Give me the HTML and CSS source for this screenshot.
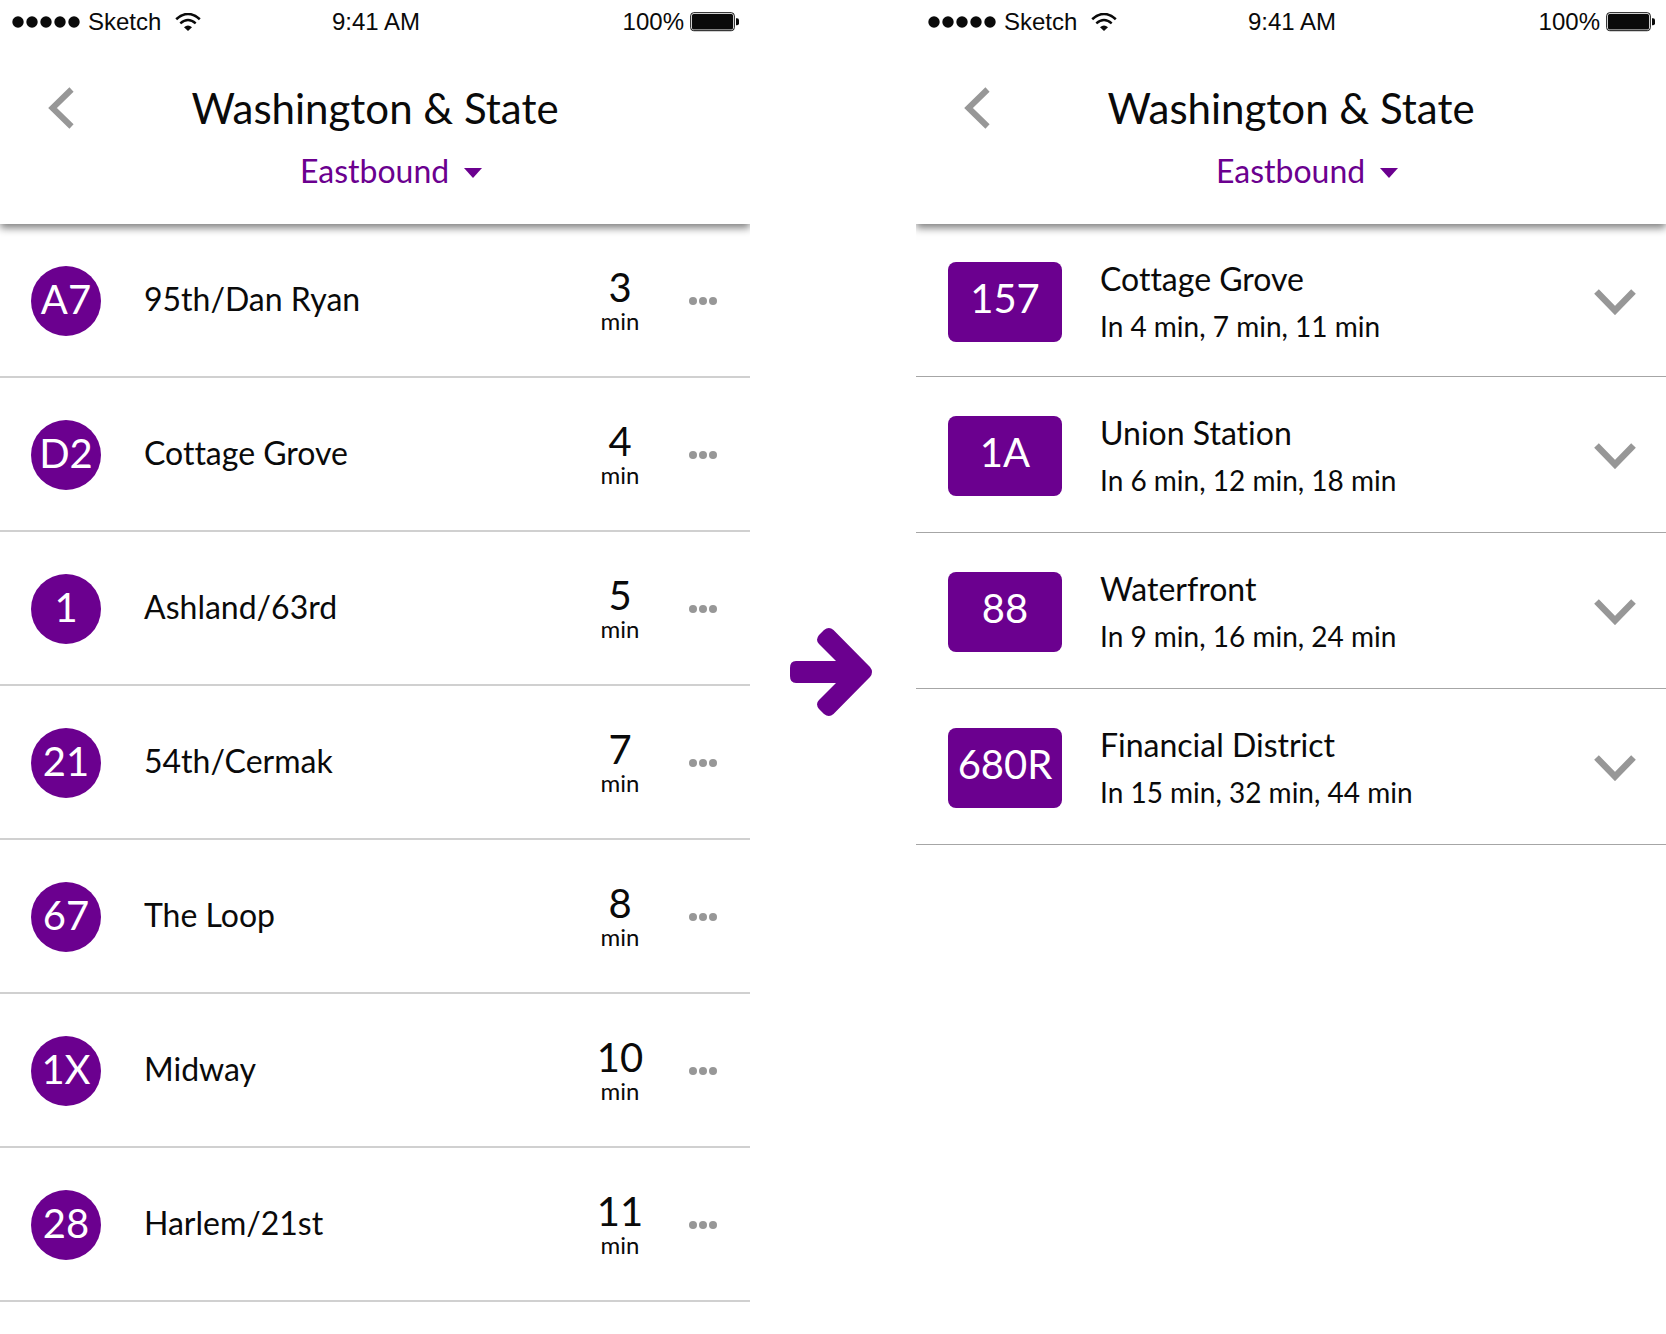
FILE: index.html
```html
<!DOCTYPE html>
<html lang="en">
<head>
<meta charset="utf-8">
<meta name="viewport" content="width=device-width, initial-scale=1">
<title>Washington &amp; State departures</title>
<link rel="stylesheet" href="styles.css">
</head>
<body>
<svg width="0" height="0" class="sprite" aria-hidden="true">
  <symbol id="signal" viewBox="0 0 68 12">
    <circle cx="6" cy="6" r="5.700"/><circle cx="20" cy="6" r="5.700"/><circle cx="34" cy="6" r="5.700"/><circle cx="48" cy="6" r="5.700"/><circle cx="62" cy="6" r="5.700"/>
  </symbol>
  <symbol id="wifi" viewBox="0 0 26 18">
    <path d="M1.2 6.2Q13-4.2 24.800 6.200" fill="none" stroke="currentColor" stroke-width="2.600"/>
    <path d="M5.300 10.300Q13 3.500 20.700 10.300" fill="none" stroke="currentColor" stroke-width="2.400"/>
    <path d="M9 14.200Q13 10.600 17 14.200L13 18Z"/>
  </symbol>
  <symbol id="battery" viewBox="0 0 50 20">
    <rect x=".7" y=".7" width="43.600" height="18" rx="3" fill="none" stroke="currentColor" stroke-width="1"/>
    <rect x="2" y="2" width="41" height="15.400" rx="1.500"/>
    <path d="M46 6.200h1q2 0 2 2v3q0 2-2 2h-1z"/>
  </symbol>
  <symbol id="back" viewBox="0 0 26 42"><path d="M23.500 2.500L4.500 21l19 18.500" fill="none" stroke="currentColor" stroke-width="6"/></symbol>
  <symbol id="expand" viewBox="0 0 42 26"><path d="M2.500 2.500L21 21.500l18.500-19" fill="none" stroke="currentColor" stroke-width="6.500"/></symbol>
  <symbol id="more" viewBox="0 0 28 8"><circle cx="4" cy="4" r="4"/><circle cx="14" cy="4" r="4"/><circle cx="24" cy="4" r="4"/></symbol>
</svg>

<main class="comparison">
  <section class="screen">
    <header class="top">
      <div class="status">
        <div class="carrier"><svg class="signal"><use href="#signal"/></svg><span>Sketch</span><svg class="wifi"><use href="#wifi"/></svg></div>
        <span>9:41 AM</span>
        <div class="power"><span>100%</span><svg class="battery"><use href="#battery"/></svg></div>
      </div>
      <div class="heading">
        <button class="icon-button" aria-label="Back"><svg class="back"><use href="#back"/></svg></button>
        <h1>Washington &amp; State</h1>
      </div>
      <div class="direction">
        <select aria-label="Direction"><option>Eastbound</option></select>
        <svg class="caret" viewBox="0 0 18 10"><path d="M0 0h18l-9 10z"/></svg>
      </div>
    </header>
    <ul class="list arrivals">
      <li><span class="route">A7</span><span class="name">95th/Dan Ryan</span><span class="wait"><b>3</b>min</span><button class="icon-button" aria-label="More"><svg class="more"><use href="#more"/></svg></button></li>
      <li><span class="route">D2</span><span class="name">Cottage Grove</span><span class="wait"><b>4</b>min</span><button class="icon-button" aria-label="More"><svg class="more"><use href="#more"/></svg></button></li>
      <li><span class="route">1</span><span class="name">Ashland/63rd</span><span class="wait"><b>5</b>min</span><button class="icon-button" aria-label="More"><svg class="more"><use href="#more"/></svg></button></li>
      <li><span class="route">21</span><span class="name">54th/Cermak</span><span class="wait"><b>7</b>min</span><button class="icon-button" aria-label="More"><svg class="more"><use href="#more"/></svg></button></li>
      <li><span class="route">67</span><span class="name">The Loop</span><span class="wait"><b>8</b>min</span><button class="icon-button" aria-label="More"><svg class="more"><use href="#more"/></svg></button></li>
      <li><span class="route">1X</span><span class="name">Midway</span><span class="wait"><b>10</b>min</span><button class="icon-button" aria-label="More"><svg class="more"><use href="#more"/></svg></button></li>
      <li><span class="route">28</span><span class="name">Harlem/21st</span><span class="wait"><b>11</b>min</span><button class="icon-button" aria-label="More"><svg class="more"><use href="#more"/></svg></button></li>
    </ul>
  </section>

  <svg class="arrow" viewBox="0 0 82 88" aria-hidden="true"><path d="M6 33H46L29 16Q25 12 29 7L34 2Q39-2 43.500 2L80 39Q84 44 80 49L43.500 86Q39 90 34 86L29 81Q25 76 29 72L46 55H6Q0 55 0 48V40Q0 33 6 33Z"/></svg>

  <section class="screen">
    <header class="top">
      <div class="status">
        <div class="carrier"><svg class="signal"><use href="#signal"/></svg><span>Sketch</span><svg class="wifi"><use href="#wifi"/></svg></div>
        <span>9:41 AM</span>
        <div class="power"><span>100%</span><svg class="battery"><use href="#battery"/></svg></div>
      </div>
      <div class="heading">
        <button class="icon-button" aria-label="Back"><svg class="back"><use href="#back"/></svg></button>
        <h1>Washington &amp; State</h1>
      </div>
      <div class="direction">
        <select aria-label="Direction"><option>Eastbound</option></select>
        <svg class="caret" viewBox="0 0 18 10"><path d="M0 0h18l-9 10z"/></svg>
      </div>
    </header>
    <ul class="list grouped">
      <li><span class="route">157</span><div class="details"><span class="name">Cottage Grove</span><span class="times">In 4 min, 7 min, 11 min</span></div><button class="icon-button" aria-label="Expand"><svg class="expand"><use href="#expand"/></svg></button></li>
      <li><span class="route">1A</span><div class="details"><span class="name">Union Station</span><span class="times">In 6 min, 12 min, 18 min</span></div><button class="icon-button" aria-label="Expand"><svg class="expand"><use href="#expand"/></svg></button></li>
      <li><span class="route">88</span><div class="details"><span class="name">Waterfront</span><span class="times">In 9 min, 16 min, 24 min</span></div><button class="icon-button" aria-label="Expand"><svg class="expand"><use href="#expand"/></svg></button></li>
      <li><span class="route">680R</span><div class="details"><span class="name">Financial District</span><span class="times">In 15 min, 32 min, 44 min</span></div><button class="icon-button" aria-label="Expand"><svg class="expand"><use href="#expand"/></svg></button></li>
    </ul>
  </section>
</main>
</body>
</html>
```

FILE: styles.css
```css
:root {
  --purple: #6b008f;
  --grey: #979797;
}

* { box-sizing: border-box; }

body {
  margin: 0;
  background: #fff;
  color: #0a0a0a;
  font-family: Lato, "Open Sans", sans-serif;
  font-variant-ligatures: none;
}

svg { display: block; fill: currentColor; }
.sprite { position: absolute; }

.comparison {
  display: grid;
  grid-template-columns: 1fr 166px 1fr;
  min-height: 100vh;
}

.screen { overflow: hidden; background: #fff; }

.arrow {
  width: 82px;
  height: 88px;
  margin: 10px 4px 0 0;
  place-self: center;
  color: var(--purple);
}

/* Header */
.top {
  position: relative;
  padding-bottom: 33px;
  background: #fff;
  box-shadow: 0 4px 8px rgba(0, 0, 0, .5);
}

.status {
  display: grid;
  grid-template-columns: 1fr auto 1fr;
  align-items: center;
  height: 43px;
  padding: 0 10px 0 12px;
  font-family: "Liberation Sans", sans-serif;
  font-size: 24px;
}

.carrier, .power { display: flex; align-items: center; }
.carrier { gap: 8px; }
.power { justify-content: flex-end; gap: 6px; }
.signal { width: 68px; height: 12px; }
.wifi { width: 26px; height: 18px; margin-left: 6px; }
.battery { width: 50px; height: 20px; }

.heading {
  display: grid;
  grid-template-columns: 1fr auto 1fr;
  align-items: center;
  padding: 40px 48px 18px;
}

h1 {
  margin: 0;
  font-size: 42px;
  font-weight: 400;
  line-height: 50px;
}

.icon-button {
  justify-self: start;
  padding: 0;
  border: 0;
  background: none;
  color: var(--grey);
}

.back { width: 26px; height: 42px; }
.more { width: 28px; height: 8px; }
.expand { width: 42px; height: 26px; }

.direction {
  position: relative;
  width: fit-content;
  margin: 0 auto;
  color: var(--purple);
}

.direction select {
  display: block;
  height: 40px;
  padding: 0 32px;
  border: 0;
  background: none;
  color: inherit;
  font: 32px/40px Lato, "Open Sans", sans-serif;
  appearance: none;
}

.caret {
  position: absolute;
  top: 17px;
  right: 0;
  width: 18px;
  height: 10px;
  pointer-events: none;
}

/* Rows */
.list { margin: 0; padding: 0; list-style: none; }
.list li { display: flex; align-items: center; }

.route {
  display: flex;
  justify-content: center;
  background: var(--purple);
  color: #fff;
  font-size: 40px;
}

.name { font-size: 32px; line-height: 48px; }

.arrivals li {
  height: 154px;
  padding: 2px 33px 0 31px;
  border-bottom: 2px solid #d0d0d0;
}

.arrivals .route {
  width: 70px;
  height: 70px;
  border-radius: 50%;
  line-height: 66px;
}

.arrivals .name { flex: 1; padding: 0 0 4px 43px; }

.wait {
  width: 60px;
  margin-right: 39px;
  font-size: 24px;
  line-height: 28px;
  text-align: center;
}

.wait b {
  display: block;
  font-size: 40px;
  font-weight: 400;
  line-height: 40px;
}

.grouped li {
  height: 156px;
  padding: 3px 30px 0 32px;
  border-bottom: 1px solid #a6a6a6;
}

.grouped li:first-child { height: 153px; }

.grouped .route {
  width: 114px;
  height: 80px;
  border-radius: 8px;
  line-height: 72px;
}

.details {
  display: flex;
  flex: 1;
  flex-direction: column;
  padding-left: 38px;
}

.times { font-size: 28px; line-height: 46px; }
```
